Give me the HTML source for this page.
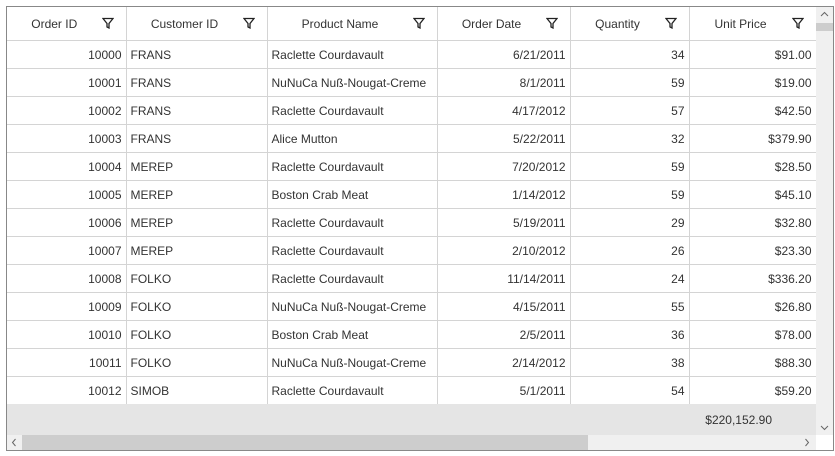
<!DOCTYPE html><html><head><style>
body{margin:0;width:835px;height:456px;background:#fff;font-family:"Liberation Sans",sans-serif;font-size:12px;color:#333;position:relative;overflow:hidden}
.g{position:absolute;left:6px;top:6px;width:826px;height:443px;border:1px solid #888;}
table{position:absolute;left:0;top:0;border-collapse:collapse;table-layout:fixed}
td,th{border-right:1px solid #d4d4d4;border-bottom:1px solid #d4d4d4;padding:0 4px;white-space:nowrap;overflow:hidden}
th{height:33px;font-weight:normal;text-align:center;position:relative;padding-right:28px}
th svg{position:absolute;right:12px;top:10px}
td{height:27px}
.r{text-align:right}
.sum{position:absolute;left:0;top:397px;width:809px;height:31px;background:#e5e5e5}
.sum span{position:absolute;right:44px;top:9px}
.hs{position:absolute;left:0;top:428px;width:809px;height:15px;background:#f0f0f0}
.vs{position:absolute;left:809px;top:0;width:17px;height:428px;background:#f0f0f0}
.corner{position:absolute;left:809px;top:428px;width:17px;height:15px;background:#fff}
</style></head><body><div class="g">
<table>
<colgroup><col width="119"><col width="141"><col width="170"><col width="133"><col width="119"><col width="127"></colgroup>
<tr>
<th>Order ID<svg width="12" height="12" viewBox="0 0 12 12"><path d="M1 1.5H11L7 6.5V11L5 10V6.5Z" fill="none" stroke="#222" stroke-width="1.3"/></svg></th>
<th>Customer ID<svg width="12" height="12" viewBox="0 0 12 12"><path d="M1 1.5H11L7 6.5V11L5 10V6.5Z" fill="none" stroke="#222" stroke-width="1.3"/></svg></th>
<th>Product Name<svg width="12" height="12" viewBox="0 0 12 12"><path d="M1 1.5H11L7 6.5V11L5 10V6.5Z" fill="none" stroke="#222" stroke-width="1.3"/></svg></th>
<th>Order Date<svg width="12" height="12" viewBox="0 0 12 12"><path d="M1 1.5H11L7 6.5V11L5 10V6.5Z" fill="none" stroke="#222" stroke-width="1.3"/></svg></th>
<th>Quantity<svg width="12" height="12" viewBox="0 0 12 12"><path d="M1 1.5H11L7 6.5V11L5 10V6.5Z" fill="none" stroke="#222" stroke-width="1.3"/></svg></th>
<th>Unit Price<svg width="12" height="12" viewBox="0 0 12 12"><path d="M1 1.5H11L7 6.5V11L5 10V6.5Z" fill="none" stroke="#222" stroke-width="1.3"/></svg></th>
</tr>
<tr><td class="r">10000</td><td>FRANS</td><td>Raclette Courdavault</td><td class="r">6/21/2011</td><td class="r">34</td><td class="r">$91.00</td></tr>
<tr><td class="r">10001</td><td>FRANS</td><td>NuNuCa Nuß-Nougat-Creme</td><td class="r">8/1/2011</td><td class="r">59</td><td class="r">$19.00</td></tr>
<tr><td class="r">10002</td><td>FRANS</td><td>Raclette Courdavault</td><td class="r">4/17/2012</td><td class="r">57</td><td class="r">$42.50</td></tr>
<tr><td class="r">10003</td><td>FRANS</td><td>Alice Mutton</td><td class="r">5/22/2011</td><td class="r">32</td><td class="r">$379.90</td></tr>
<tr><td class="r">10004</td><td>MEREP</td><td>Raclette Courdavault</td><td class="r">7/20/2012</td><td class="r">59</td><td class="r">$28.50</td></tr>
<tr><td class="r">10005</td><td>MEREP</td><td>Boston Crab Meat</td><td class="r">1/14/2012</td><td class="r">59</td><td class="r">$45.10</td></tr>
<tr><td class="r">10006</td><td>MEREP</td><td>Raclette Courdavault</td><td class="r">5/19/2011</td><td class="r">29</td><td class="r">$32.80</td></tr>
<tr><td class="r">10007</td><td>MEREP</td><td>Raclette Courdavault</td><td class="r">2/10/2012</td><td class="r">26</td><td class="r">$23.30</td></tr>
<tr><td class="r">10008</td><td>FOLKO</td><td>Raclette Courdavault</td><td class="r">11/14/2011</td><td class="r">24</td><td class="r">$336.20</td></tr>
<tr><td class="r">10009</td><td>FOLKO</td><td>NuNuCa Nuß-Nougat-Creme</td><td class="r">4/15/2011</td><td class="r">55</td><td class="r">$26.80</td></tr>
<tr><td class="r">10010</td><td>FOLKO</td><td>Boston Crab Meat</td><td class="r">2/5/2011</td><td class="r">36</td><td class="r">$78.00</td></tr>
<tr><td class="r">10011</td><td>FOLKO</td><td>NuNuCa Nuß-Nougat-Creme</td><td class="r">2/14/2012</td><td class="r">38</td><td class="r">$88.30</td></tr>
<tr><td class="r">10012</td><td>SIMOB</td><td>Raclette Courdavault</td><td class="r">5/1/2011</td><td class="r">54</td><td class="r">$59.20</td></tr>
</table>
<div class="sum"><span>$220,152.90</span></div>
<div class="hs"><div style="position:absolute;left:15px;top:0;width:566px;height:15px;background:#cdcdcd"></div>
<svg style="position:absolute;left:3px;top:3px" width="8" height="9"><path d="M5.5 1L2.5 4.5L5.5 8" fill="none" stroke="#666"/></svg>
<svg style="position:absolute;left:796px;top:3px" width="8" height="9"><path d="M2.5 1L5.5 4.5L2.5 8" fill="none" stroke="#666"/></svg></div>
<div class="vs"><div style="position:absolute;left:0;top:16px;width:17px;height:8px;background:#cdcdcd"></div>
<svg style="position:absolute;left:4px;top:4px" width="9" height="7"><path d="M1 5L4.5 1.5L8 5" fill="none" stroke="#666"/></svg>
<svg style="position:absolute;left:4px;top:417px" width="9" height="7"><path d="M1 2L4.5 5.5L8 2" fill="none" stroke="#666"/></svg></div>
<div class="corner"></div>
</div></body></html>
